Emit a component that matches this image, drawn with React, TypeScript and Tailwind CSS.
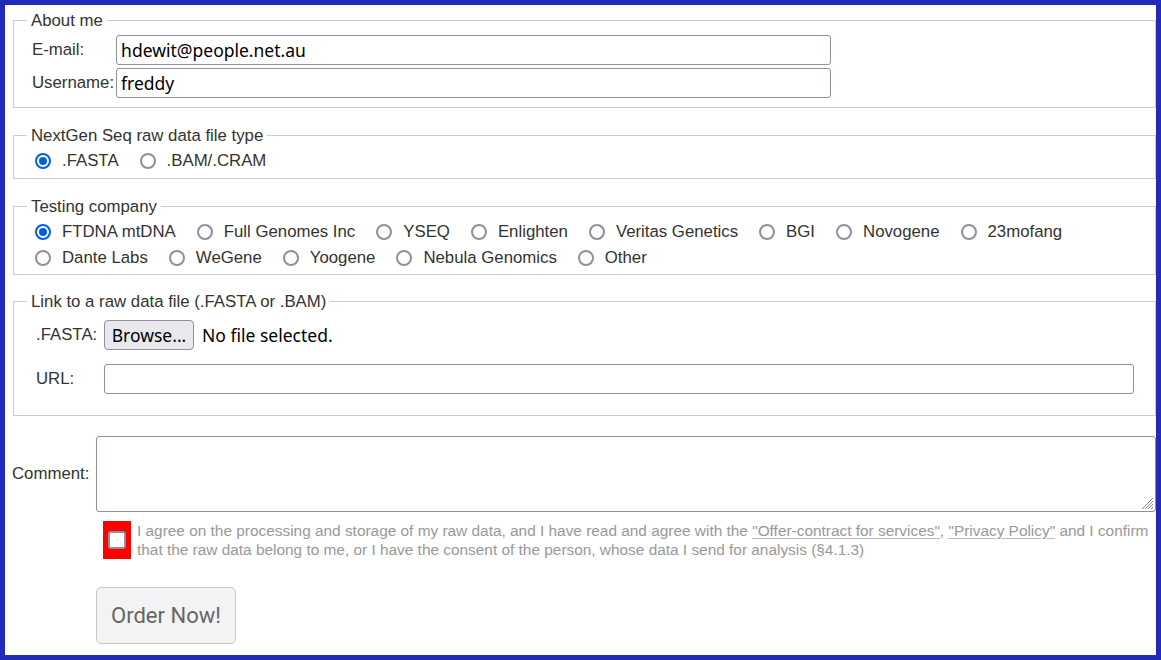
import React from "react";

function Radio({ checked }: { checked?: boolean }) {
  if (checked) {
    return (
      <span className="flex h-[16px] w-[16px] shrink-0 items-center justify-center rounded-full border-2 border-[#0060df] bg-white">
        <span className="h-[8px] w-[8px] rounded-full bg-[#0060df]" />
      </span>
    );
  }
  return <span className="block h-[16px] w-[16px] shrink-0 rounded-full border-2 border-[#8f8f9d] bg-white" />;
}

function Item({ label, checked }: { label: string; checked?: boolean }) {
  return (
    <span className="mr-[21px] flex items-center">
      <Radio checked={checked} />
      <span className="ml-[11px] whitespace-nowrap">{label}</span>
    </span>
  );
}

const inputFont = "font-['Noto_Sans','Open_Sans',sans-serif] text-[17.5px] text-black";

export default function App() {
  return (
    <div className="h-[660px] w-[1161px] overflow-hidden border-[5px] border-[#2329b8] bg-white font-['Liberation_Sans',Arial,sans-serif] text-[16.8px] text-[#333]">
      <fieldset className="ml-2 mt-[5px] border border-[#cccccc] pb-[9px] pl-[13px] pr-[13px]">
        <legend className="px-[4px] leading-[21px]">About me</legend>
        <div className="grid grid-cols-[max-content_715px] items-center gap-y-[3px] pl-[5px] pt-[4px]">
          <span className="pr-[2px]">E-mail:</span>
          <div className={`flex h-[30px] items-center rounded-[3px] border border-[#8f8f9d] px-[4px] ${inputFont}`}>
            hdewit@people.net.au
          </div>
          <span className="pr-[2px]">Username:</span>
          <div className={`flex h-[30px] items-center rounded-[3px] border border-[#8f8f9d] px-[4px] ${inputFont}`}>
            freddy
          </div>
        </div>
      </fieldset>

      <fieldset className="ml-2 mt-[17px] border border-[#cccccc] pb-[4px] pl-[13px] pr-[13px]">
        <legend className="px-[4px] leading-[21px]">NextGen Seq raw data file type</legend>
        <div className="mt-[2px] flex h-[26px] items-center pl-[8px]">
          <Item label=".FASTA" checked />
          <Item label=".BAM/.CRAM" />
        </div>
      </fieldset>

      <fieldset className="ml-2 mt-[17px] border border-[#cccccc] pb-[3px] pl-[13px] pr-[13px]">
        <legend className="px-[4px] leading-[21px]">Testing company</legend>
        <div className="mt-[2px] pl-[8px]">
          <div className="flex h-[26px] items-center">
            <Item label="FTDNA mtDNA" checked />
            <Item label="Full Genomes Inc" />
            <Item label="YSEQ" />
            <Item label="Enlighten" />
            <Item label="Veritas Genetics" />
            <Item label="BGI" />
            <Item label="Novogene" />
            <Item label="23mofang" />
          </div>
          <div className="flex h-[26px] items-center">
            <Item label="Dante Labs" />
            <Item label="WeGene" />
            <Item label="Yoogene" />
            <Item label="Nebula Genomics" />
            <Item label="Other" />
          </div>
        </div>
      </fieldset>

      <fieldset className="ml-2 mt-[16px] border border-[#cccccc] pb-[21px] pl-[13px] pr-[13px]">
        <legend className="px-[4px] leading-[21px]">Link to a raw data file (.FASTA or .BAM)</legend>
        <div className="grid grid-cols-[68px_auto] items-center gap-y-[14px] pl-[9px] pt-[8px]">
          <span>.FASTA:</span>
          <div className="flex h-[30px] items-center">
            <span className={`flex h-[30px] w-[90px] items-center justify-center rounded-[4px] border border-[#8f8f9d] bg-[#e9e9ed] ${inputFont}`}>
              Browse...
            </span>
            <span className={`ml-[8px] ${inputFont}`}>No file selected.</span>
          </div>
          <span>URL:</span>
          <div className="h-[30px] w-[1030px] rounded-[3px] border border-[#8f8f9d]" />
        </div>
      </fieldset>

      <div className="mt-[20px] flex items-center pl-[7px]">
        <span className="mr-[7px]">Comment:</span>
        <div className="relative h-[76px] flex-1 rounded-[3px] border border-[#8f8f9d]">
          <svg className="absolute bottom-[1px] right-[1px]" width="13" height="13" viewBox="0 0 13 13">
            <path d="M12 1 L1 12 M12 4 L4 12 M12 7 L7 12 M12 10 L10 12" stroke="#8a8a8a" strokeWidth="1" fill="none" />
          </svg>
        </div>
      </div>

      <div className="ml-[98px] mt-[9px] flex">
        <div className="flex items-center bg-[#ff0000] px-[5px]">
          <span className="block h-[18px] w-[18px] rounded-[3px] border-2 border-[#8f8f9d] bg-white" />
        </div>
        <div className="ml-[6px] whitespace-nowrap text-[15.4px] leading-[19px] text-[#999999]">
          I agree on the processing and storage of my raw data, and I have read and agree with the{" "}
          <span className="underline decoration-[#bbbbbb] underline-offset-2">"Offer-contract for services"</span>,{" "}
          <span className="underline decoration-[#bbbbbb] underline-offset-2">"Privacy Policy"</span> and I confirm
          <br />
          that the raw data belong to me, or I have the consent of the person, whose data I send for analysis (§4.1.3)
        </div>
      </div>

      <div className="ml-[91px] mt-[28px]">
        <div className="flex h-[57px] w-[140px] items-center justify-center rounded-[5px] border border-[#c8c8c8] bg-[#f3f3f5] font-['Roboto',sans-serif] text-[22px] text-[#666666]">
          Order Now!
        </div>
      </div>
    </div>
  );
}
